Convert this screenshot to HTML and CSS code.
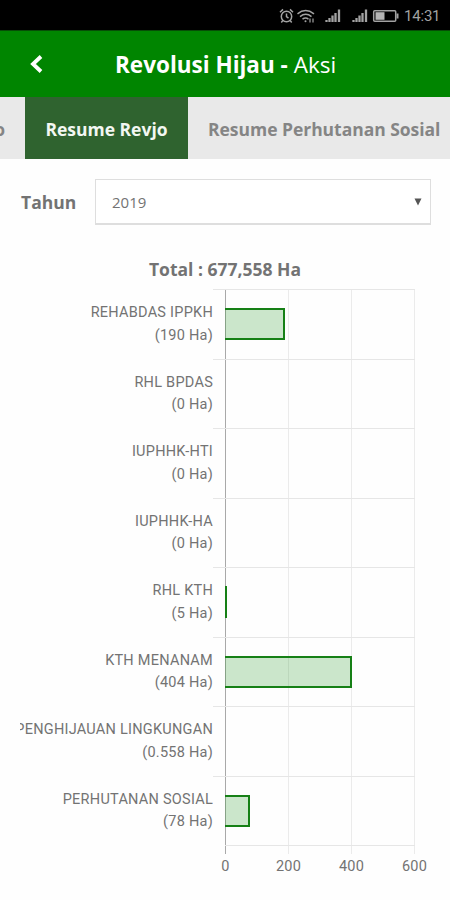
FILE: index.html
```html
<!DOCTYPE html>
<html lang="id">
<head>
<meta charset="utf-8">
<title>Revolusi Hijau - Aksi</title>
<link rel="stylesheet" href="styles.css">
</head>
<body>
<div class="status">
  <svg class="status-icons" width="122" height="20" viewBox="0 0 122 20" fill="none" stroke="#a2a2a2" stroke-width="1.5">
    <circle cx="7.5" cy="10.5" r="5.2"/><path d="M7.5 7.5v3.2l2 1.5M1 6.2l3-2.8M14 6.2l-3-2.8M3.8 14.6l-1.5 1.8M11.2 14.6l1.5 1.8"/>
    <path d="M18.5 7.8q8-6.4 16.500 0M21 10.600q5.800-4.600 11.500 0M23.500 13.200q3.200-2.500 6 0" /><circle cx="26.500" cy="15.200" r="1" fill="#a2a2a2" stroke="none"/><path d="M31 12.500v4M34 12.500v4" stroke-width="1.200"/>
    <path d="M47.500 16v-2M50.500 16v-4M53.500 16v-6.500M56.500 16V7M60 16V3.500M74.500 16v-2M77.500 16v-4M80.500 16v-6.500M83.500 16V7M87 16V3.500" stroke-width="2.300"/>
    <rect x="94.700" y="4.700" width="22" height="10.600" rx="1"/><path d="M118.500 7.500v5" stroke-width="2"/><rect x="96.500" y="6.200" width="9" height="7.600" fill="#b5b5b5" stroke="none"/>
  </svg>
  <span class="clock">14:31</span>
</div>
<header class="appbar">
  <svg class="back" width="16" height="20" viewBox="0 0 16 20"><path d="M13 2.500L5 10l8 7.500" fill="none" stroke="#fff" stroke-width="3.800"/></svg>
  <h1 class="title"><b>Revolusi Hijau -</b> Aksi</h1>
</header>
<nav class="tabs">
  <div class="tab tab-prev">Revjo</div>
  <div class="tab tab-active">Resume Revjo</div>
  <div class="tab tab-next">Resume Perhutanan Sosial</div>
</nav>
<div class="filter">
  <span class="filter-label">Tahun</span>
  <div class="select"><span>2019</span><svg width="8" height="8" viewBox="0 0 8 8"><path d="M.5 .5h7L4 7.500z" fill="#555"/></svg></div>
</div>
<h2 class="total">Total : 677,558 Ha</h2>
<div class="chart">
  <div class="row"><div class="label"><span>REHABDAS IPPKH</span><span>(190 Ha)</span></div><div class="plot"><div class="grid"></div><div class="bar" style="width:60px"></div></div></div>
  <div class="row"><div class="label"><span>RHL BPDAS</span><span>(0 Ha)</span></div><div class="plot"><div class="grid"></div></div></div>
  <div class="row"><div class="label"><span>IUPHHK-HTI</span><span>(0 Ha)</span></div><div class="plot"><div class="grid"></div></div></div>
  <div class="row"><div class="label"><span>IUPHHK-HA</span><span>(0 Ha)</span></div><div class="plot"><div class="grid"></div></div></div>
  <div class="row"><div class="label"><span>RHL KTH</span><span>(5 Ha)</span></div><div class="plot"><div class="grid"></div><div class="bar" style="width:2px"></div></div></div>
  <div class="row"><div class="label"><span>KTH MENANAM</span><span>(404 Ha)</span></div><div class="plot"><div class="grid"></div><div class="bar" style="width:127px"></div></div></div>
  <div class="row"><div class="label"><span>PENGHIJAUAN LINGKUNGAN</span><span>(0.558 Ha)</span></div><div class="plot"><div class="grid"></div></div></div>
  <div class="row"><div class="label"><span>PERHUTANAN SOSIAL</span><span>(78 Ha)</span></div><div class="plot"><div class="grid"></div><div class="bar" style="width:25px"></div></div></div>
  <div class="ticks"><div class="grid"></div></div>
  <div class="axis"><span>0</span><span>200</span><span>400</span><span>600</span></div>
</div>
</body>
</html>
```
FILE: styles.css
```css
* { box-sizing: border-box; }
body { margin: 0; width: 450px; height: 900px; overflow: hidden; background: #fefefe; color: #737373; font-family: "Open Sans", sans-serif; }
.status { height: 30px; background: #000; display: flex; align-items: center; justify-content: flex-end; padding: 1px 10px 0 0; color: #a2a2a2; }
.status-icons { margin-right: 3px; }
.clock { width: 36px; font: 15px/20px Roboto, sans-serif; letter-spacing: -.2px; white-space: nowrap; }
.appbar { height: 67px; background: #008500; border-top: 1px solid #064d06; display: flex; align-items: center; padding-left: 28px; color: #fff; }
.title { margin: 1px 0 0 71px; font-size: 22.500px; font-weight: 400; line-height: 30px; white-space: nowrap; }
.back { flex: none; }
.tabs { height: 62px; display: flex; background: #e9e9e9; font-weight: 700; font-size: 17.500px; color: #858585; white-space: nowrap; line-height: 64px; overflow: hidden; }
.tab { flex: none; }
.tab-prev { width: 25px; padding-right: 20px; display: flex; justify-content: flex-end; }
.tab-active { width: 163px; background: #2f632f; color: #f2f7f2; text-align: center; }
.tab-next { padding-left: 20px; letter-spacing: -.03px; }
.filter { display: flex; align-items: center; margin: 20px 19px 0 20px; height: 46px; }
.filter-label { width: 75px; padding-left: 1px; font-size: 17.500px; font-weight: 700; }
.select { flex: 1; height: 46px; border: 1px solid #dedede; border-width: 1px 1px 2px 1px; background: #fff; display: flex; align-items: center; justify-content: space-between; padding: 0 8px 0 16px; font-size: 15px; }
.total { margin: 32px 0 8px; font-size: 17.500px; font-weight: 700; line-height: 24px; text-align: center; }
.chart { font-family: Roboto, sans-serif; font-size: 14.500px; color: #737373; }
.row { display: grid; grid-template-columns: 193px 202px; height: 69.500px; margin-left: 20px; }
.label { display: flex; flex-direction: column; align-items: flex-end; line-height: 22.500px; padding-top: 13.300px; white-space: nowrap; overflow: hidden; letter-spacing: .25px; }
.plot { display: grid; grid-template-columns: 12px 190px; border-top: 1px solid #e6e6e6; align-items: center; }
.grid { grid-area: 1 / 2; align-self: stretch; background: linear-gradient(#a9a9a9, #a9a9a9) 0 0 / 1px 100% no-repeat, repeating-linear-gradient(to right, #ebebeb 0 1px, transparent 1px 63px); }
.bar { grid-area: 1 / 2; height: 32px; background: rgba(0, 133, 0, .2); border: 2px solid #168016; border-left: 0; }
.ticks { display: grid; grid-template-columns: 1px 190px; margin-left: 224px; height: 9px; }
.ticks .grid { border-top: 1px solid #e6e6e6; }
.axis { display: grid; grid-template-columns: repeat(4, 63px); margin-left: 194px; text-align: center; line-height: 26px; letter-spacing: .2px; }
```
